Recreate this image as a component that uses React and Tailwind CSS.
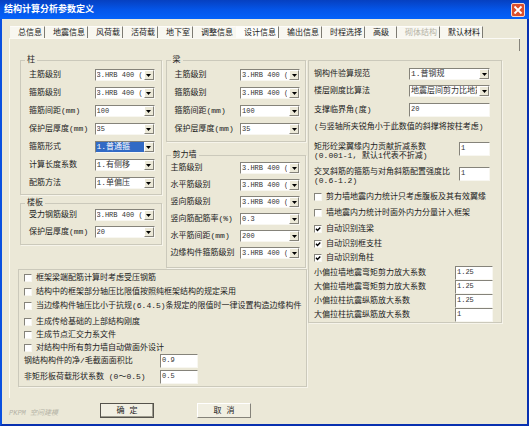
import { useId, useState } from 'react'
import clsx from 'clsx'

const TABS = [
  '总信息', '地震信息', '风荷载', '活荷载', '地下室', '调整信息',
  '设计信息', '输出信息', '时程选择', '高级', '砌体结构', '默认材料',
]

const HRB = '3.HRB 400 (C)'

const COLUMN_ROWS = [
  ['主筋级别', HRB],
  ['箍筋级别', HRB],
  ['箍筋间距(mm)', '100'],
  ['保护层厚度(mm)', '35'],
  ['箍筋形式', '1.普通箍', true],
  ['计算长度系数', '1.有侧移'],
  ['配筋方法', '1.单偏压'],
]

const SLAB_ROWS = [
  ['受力钢筋级别', HRB],
  ['保护层厚度(mm)', '20'],
]

const BEAM_ROWS = COLUMN_ROWS.slice(0, 4)

const WALL_ROWS = [
  ['主筋级别', HRB],
  ['水平筋级别', HRB],
  ['竖向筋级别', HRB],
  ['竖向筋配筋率(%)', '0.3'],
  ['水平筋间距(mm)', '200'],
  ['边缘构件箍筋级别', HRB],
]

const FACTORS = [
  ['小偏拉墙地震弯矩剪力放大系数', '1.25'],
  ['大偏拉墙地震弯矩剪力放大系数', '1.25'],
  ['小偏拉柱抗震纵筋放大系数', '1.25'],
  ['大偏拉柱抗震纵筋放大系数', '1'],
]

const SUNKEN = 'border border-t-[#85837a] border-l-[#85837a] border-r-[#f8f7f1] border-b-[#f8f7f1] bg-white'
const FRAME = 'border border-[#cbc9bb] shadow-[1px_1px_0_#f6f4ea]'

function valueFont(value) {
  return /^[\x00-\x7f]*$/.test(value) ? 'text-[7px]' : 'text-[8px]'
}

function Combo({ id, value, active, className }) {
  return (
    <div className={clsx('relative h-3', className)}>
      <select
        id={id}
        className={clsx(
          'block w-full h-3 appearance-none pl-px pr-3 leading-[10px] outline-none overflow-hidden',
          SUNKEN, valueFont(value), active ? 'text-white' : 'text-[#333]',
          active && 'bg-[#316ac5]!',
        )}
      >
        <option>{value}</option>
      </select>
      <span className="absolute right-px top-px bottom-px w-[10px] pointer-events-none flex items-center justify-center bg-[#ece9d8] border border-t-white border-l-white border-r-[#85837a] border-b-[#85837a]">
        <svg width="5" height="3" viewBox="0 0 5 3"><path d="M0 0h5L2.5 3z" fill="#000" /></svg>
      </span>
    </div>
  )
}

function TextBox({ id, value, className }) {
  return (
    <input
      id={id}
      type="text"
      defaultValue={value}
      className={clsx('block pl-px pb-[2px] outline-none text-[#333]', SUNKEN, valueFont(value), className)}
    />
  )
}

function ComboRow({ label, value, active }) {
  const id = useId()
  return (
    <div className="flex items-center justify-between">
      <label htmlFor={id} className="whitespace-nowrap">{label}</label>
      <Combo id={id} value={value} active={active} className="w-[60px] shrink-0" />
    </div>
  )
}

function Check({ label, checked, className }) {
  return (
    <label className={clsx('flex items-center gap-1 whitespace-nowrap', className)}>
      <span className="grid size-2 shrink-0">
        <input
          type="checkbox"
          defaultChecked={checked}
          className={clsx('peer col-start-1 row-start-1 size-2 appearance-none', SUNKEN)}
        />
        <svg viewBox="0 0 8 8" className="hidden peer-checked:block col-start-1 row-start-1 size-2 pointer-events-none">
          <path d="M2 3.7L3.5 5.4L6.3 2.4" fill="none" stroke="#000" strokeWidth="1.4" />
        </svg>
      </span>
      {label}
    </label>
  )
}

function Group({ title, className, rows }) {
  return (
    <fieldset className={clsx('min-w-0', FRAME)}>
      <legend className="ml-1 px-[2px] h-[10px] leading-[10px]">{title}</legend>
      <div className={clsx('flex flex-col', className)}>
        {rows.map(([label, value, active]) => (
          <ComboRow key={label} label={label} value={value} active={active} />
        ))}
      </div>
    </fieldset>
  )
}

export default function App() {
  const [tab, setTab] = useState('设计信息')

  return (
    <div className="bg-white pr-px pb-px font-['Liberation_Mono','Noto_Sans_CJK_SC',monospace] text-[8px] leading-[10px] text-[#222]">
      <div className="bg-[#ebe8d7] border-2 border-t-0 border-l-[#0a50e0] border-r-[#0830b0] border-b-[#0830b0]">
        {/* Title bar */}
        <header className="-mx-[2px] h-[19px] pl-1 pr-1 flex items-center justify-between bg-linear-to-b from-[#0640c0] via-[#0455e8] to-[#0462fa]">
          <h1 className="text-[9px] font-bold text-white">结构计算分析参数定义</h1>
          <button type="button" aria-label="关闭" className="size-[14px] mt-px rounded-[2px] border border-[#f4d8d0] bg-[#db4f2c] flex items-center justify-center">
            <svg width="10" height="10" viewBox="0 0 10 10" className="shrink-0">
              <path d="M1.5 1.5L8.5 8.5M8.5 1.5L1.5 8.5" stroke="#fff" strokeWidth="1.8" />
            </svg>
          </button>
        </header>

        {/* Tabs */}
        <nav className="mt-[7px] ml-2 flex h-3" role="tablist">
          {TABS.map((name) => (
            <button
              key={name}
              type="button"
              role="tab"
              aria-selected={tab === name}
              disabled={name === '砌体结构'}
              onClick={() => setTab(name)}
              className={clsx(
                'pl-2 border-r whitespace-nowrap border-t border-t-[#fdfcf9]',
                name === '高级' ? 'pr-[7px]' : 'pr-[2px]',
                name === '调整信息' ? 'border-r-transparent' : 'border-r-[#7d7b72]',
                tab === name ? 'bg-[#fdfdfa]' : 'bg-[#f8f7f0]',
                name === '砌体结构' && 'text-[#b5b3a6]',
              )}
            >
              {name}
            </button>
          ))}
        </nav>

        {/* Tab page */}
        <main className="relative ml-[7px] mr-[7px] border-t border-l border-[#fbfaf5] pt-4 pb-[11px] pl-2 pr-[18px]">
          <span className="absolute right-0 top-0 h-3 w-px bg-[#85837a]" />
          <div className="grid grid-cols-[289fr_194fr] gap-px items-start">
            <div className="min-w-0">
              <div className="grid grid-cols-[141fr_140fr] gap-1 pl-[2px] pr-px">
                <div className="flex flex-col gap-[3px]">
                  <Group title="柱" rows={COLUMN_ROWS} className="gap-[6px] pt-1 pb-[5px] pl-2 pr-[6px]" />
                  <Group title="楼板" rows={SLAB_ROWS} className="gap-[5px] pt-px pb-[6px] pl-2 pr-[6px]" />
                </div>
                <div className="flex flex-col gap-2">
                  <Group title="梁" rows={BEAM_ROWS} className="gap-[6px] pt-1 pb-[6px] pl-2 pr-[5px]" />
                  <Group title="剪力墙" rows={WALL_ROWS} className="gap-[5px] pt-[2px] pb-2 pl-1 pr-[5px]" />
                </div>
              </div>

              <section className={clsx('mt-px pl-[5px] pt-px pb-[2px]', FRAME)}>
                <Check className="h-[14px]" label="框架梁端配筋计算时考虑受压钢筋" />
                <Check className="h-[14px]" label="结构中的框架部分轴压比限值按照纯框架结构的规定采用" />
                <Check className="h-[14px]" label="当边缘构件轴压比小于抗规(6.4.5)条规定的限值时一律设置构造边缘构件" />
                <Check className="h-[13px] mt-[2px]" label="生成传给基础的上部结构刚度" />
                <Check className="h-[13px]" label="生成节点汇交力系文件" />
                <Check className="h-[13px]" label="对结构中所有剪力墙自动做面外设计" />
                <div className="grid grid-cols-[136px_38px] gap-y-[2px] items-center">
                  <label htmlFor="net-ratio">钢结构构件的净/毛截面面积比</label>
                  <TextBox id="net-ratio" value="0.9" className="h-[14px]" />
                  <label htmlFor="shape-factor">非矩形板荷载形状系数 (0～0.5)</label>
                  <TextBox id="shape-factor" value="0.5" className="h-[14px]" />
                </div>
              </section>
            </div>

            <section className={clsx('mt-[5px] min-w-0 pl-[5px] pt-[7px]', FRAME)}>
              <div className="grid grid-cols-[95px_81px] gap-y-[5px] items-center">
                <label htmlFor="steel-code">钢构件验算规范</label>
                <Combo id="steel-code" value="1.普钢规" />
                <label htmlFor="stiff-ratio">楼层刚度比算法</label>
                <Combo id="stiff-ratio" value="地震层间剪力比地震层间位移" />
                <label htmlFor="brace-angle">支撑临界角(度)</label>
                <TextBox id="brace-angle" value="20" className="h-[14px] mt-px" />
              </div>
              <p className="mt-[5px] whitespace-nowrap">(与竖轴所夹锐角小于此数值的斜撑将按柱考虑)</p>

              <div className="mt-[10px] grid grid-cols-[145px_31px] gap-y-[7px] items-start leading-[9px]">
                <label htmlFor="flange-factor" className="whitespace-nowrap">矩形砼梁翼缘内力贡献折减系数<br />(0.001-1, 默认1代表不折减)</label>
                <TextBox id="flange-factor" value="1" className="h-[14px]" />
                <label htmlFor="cross-ratio" className="whitespace-nowrap">交叉斜筋的箍筋与对角斜筋配置强度比<br />(0.6-1.2)</label>
                <TextBox id="cross-ratio" value="1" className="h-[14px]" />
              </div>

              <div className="mt-1">
                <Check className="h-4" label="剪力墙地震内力统计只考虑腹板及其有效翼缘" />
                <Check className="h-4" label="墙地震内力统计时面外内力分量计入框架" />
                <Check className="h-4" label="自动识别连梁" checked />
                <Check className="h-[14px]" label="自动识别框支柱" checked />
                <Check className="h-[14px]" label="自动识别角柱" checked />
              </div>

              <div className="mt-px">
                {FACTORS.map(([label, value], i) => (
                  <div key={label} className="grid grid-cols-[141px_38px] items-center">
                    <label htmlFor={`factor-${i}`}>{label}</label>
                    <TextBox id={`factor-${i}`} value={value} className="h-[14px]" />
                  </div>
                ))}
              </div>
            </section>
          </div>
        </main>

        <footer className="flex pt-[5px] pb-[6px] pl-[7px]">
          <span className="w-[91px] self-end italic text-[7px] text-[#b5b3a6]">PKPM 空间建模</span>
          <button type="button" className="w-[54px] h-[15px] border border-[#55534c] bg-[#f1efe2] shadow-[inset_-1px_-1px_0_#9d9b8e]">确 定</button>
          <button type="button" className="ml-[43px] w-[54px] h-[15px] border border-t-white border-l-white border-r-[#85837a] border-b-[#85837a] bg-[#f1efe2]">取 消</button>
        </footer>
      </div>
    </div>
  )
}
